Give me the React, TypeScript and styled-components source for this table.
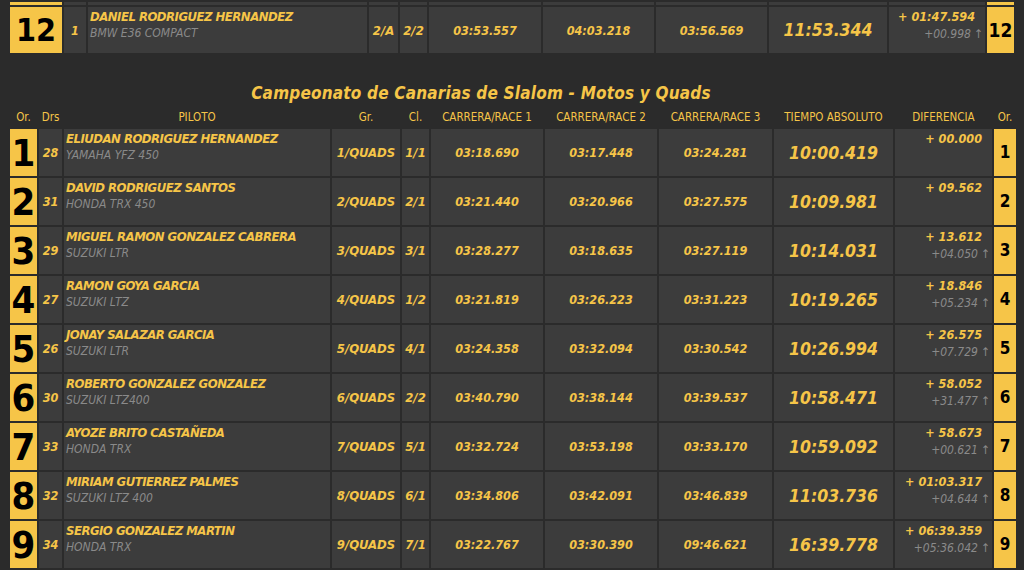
import styled, { createGlobalStyle } from 'styled-components'

const colors = {
  page: '#2b2b2b',
  cell: '#3c3c3c',
  yellow: '#f6c548',
  grey: '#8a8a8a',
}

const font = `'DejaVu Sans', 'Open Sans', sans-serif`

const GlobalStyle = createGlobalStyle`
  html, body {
    margin: 0;
    padding: 0;
    background: ${colors.page};
    overflow: hidden;
  }
  body {
    font-family: ${font};
    font-stretch: condensed;
  }
`

const Page = styled.div`
  width: 1024px;
  height: 570px;
  padding: 0 8px;
  box-sizing: border-box;
  overflow: hidden;
`

const Table = styled.table`
  width: 100%;
  table-layout: fixed;
  border-collapse: separate;
  border-spacing: 2px;
`

const Title = styled.h2`
  margin: 28px 0 1px 0;
  padding-right: 62px;
  height: 20px;
  line-height: 20px;
  text-align: center;
  color: ${colors.yellow};
  font-size: 17px;
  font-style: italic;
  font-weight: bold;
  letter-spacing: 0.2px;
`

const Head = styled.th`
  height: 21px;
  padding: 0;
  color: ${colors.yellow};
  font-size: 11.5px;
  font-weight: normal;
  text-align: center;
  white-space: nowrap;
`

const Stub = styled.td<{ gold?: boolean }>`
  height: 3px;
  padding: 0;
  background: ${(p) => (p.gold ? colors.yellow : colors.cell)};
`

const Cell = styled.td<{ big?: boolean }>`
  height: ${(p) => (p.big ? 46 : 47)}px;
  padding: 0;
  background: ${colors.cell};
  color: ${colors.yellow};
  font-style: italic;
  text-align: center;
  vertical-align: middle;
  white-space: nowrap;
  overflow: hidden;
`

const Pos = styled.td<{ size: number }>`
  padding: 0;
  background: ${colors.yellow};
  color: #000;
  font-size: ${(p) => p.size}px;
  font-weight: bold;
  line-height: 1;
  text-align: center;
  vertical-align: middle;
`

const Drs = styled(Cell)`
  font-size: 12.5px;
  font-weight: 600;
`

const Pilot = styled(Cell)`
  text-align: left;
  vertical-align: top;
`

const PilotInner = styled.div`
  padding: 2px 0 0 2px;
`

const Name = styled.div`
  font-size: 13px;
  font-weight: bold;
  line-height: 15px;
  letter-spacing: -0.5px;
`

const Car = styled.div`
  font-size: 12px;
  color: ${colors.grey};
  line-height: 18px;
`

const Small = styled(Cell)`
  font-size: 13px;
  font-weight: 600;
`

const Race = styled(Cell)`
  font-size: 12.5px;
  font-weight: 600;
`

const Total = styled(Cell)`
  font-size: 17.5px;
  font-weight: bold;
`

const Diff = styled(Cell)`
  text-align: right;
  vertical-align: top;
`

const DiffInner = styled.div`
  padding: 2px 10px 0 0;
`

const DiffMain = styled.div`
  font-size: 12.5px;
  font-weight: 600;
  line-height: 15px;
`

const DiffPrev = styled.div`
  font-size: 12px;
  color: ${colors.grey};
  line-height: 20px;
  margin-right: -8px;
`

const Arrow = styled.span`
  font-style: normal;
  margin-left: 3px;
`

type Row = {
  pos: number
  drs: number
  name: string
  car: string
  gr: string
  cl: string
  r1: string
  r2: string
  r3: string
  total: string
  diff: string
  prev: string
}

const topRow: Row = {
  pos: 12,
  drs: 1,
  name: 'DANIEL RODRIGUEZ HERNANDEZ',
  car: 'BMW E36 COMPACT',
  gr: '2/A',
  cl: '2/2',
  r1: '03:53.557',
  r2: '04:03.218',
  r3: '03:56.569',
  total: '11:53.344',
  diff: '+ 01:47.594',
  prev: '+00.998',
}

const rows: Row[] = [
  { pos: 1, drs: 28, name: 'ELIUDAN RODRIGUEZ HERNANDEZ', car: 'YAMAHA YFZ 450', gr: '1/QUADS', cl: '1/1', r1: '03:18.690', r2: '03:17.448', r3: '03:24.281', total: '10:00.419', diff: '+ 00.000', prev: '' },
  { pos: 2, drs: 31, name: 'DAVID RODRIGUEZ SANTOS', car: 'HONDA TRX 450', gr: '2/QUADS', cl: '2/1', r1: '03:21.440', r2: '03:20.966', r3: '03:27.575', total: '10:09.981', diff: '+ 09.562', prev: '' },
  { pos: 3, drs: 29, name: 'MIGUEL RAMON GONZALEZ CABRERA', car: 'SUZUKI LTR', gr: '3/QUADS', cl: '3/1', r1: '03:28.277', r2: '03:18.635', r3: '03:27.119', total: '10:14.031', diff: '+ 13.612', prev: '+04.050' },
  { pos: 4, drs: 27, name: 'RAMON GOYA GARCIA', car: 'SUZUKI LTZ', gr: '4/QUADS', cl: '1/2', r1: '03:21.819', r2: '03:26.223', r3: '03:31.223', total: '10:19.265', diff: '+ 18.846', prev: '+05.234' },
  { pos: 5, drs: 26, name: 'JONAY SALAZAR GARCIA', car: 'SUZUKI LTR', gr: '5/QUADS', cl: '4/1', r1: '03:24.358', r2: '03:32.094', r3: '03:30.542', total: '10:26.994', diff: '+ 26.575', prev: '+07.729' },
  { pos: 6, drs: 30, name: 'ROBERTO GONZALEZ GONZALEZ', car: 'SUZUKI LTZ400', gr: '6/QUADS', cl: '2/2', r1: '03:40.790', r2: '03:38.144', r3: '03:39.537', total: '10:58.471', diff: '+ 58.052', prev: '+31.477' },
  { pos: 7, drs: 33, name: 'AYOZE BRITO CASTAÑEDA', car: 'HONDA TRX', gr: '7/QUADS', cl: '5/1', r1: '03:32.724', r2: '03:53.198', r3: '03:33.170', total: '10:59.092', diff: '+ 58.673', prev: '+00.621' },
  { pos: 8, drs: 32, name: 'MIRIAM GUTIERREZ PALMES', car: 'SUZUKI LTZ 400', gr: '8/QUADS', cl: '6/1', r1: '03:34.806', r2: '03:42.091', r3: '03:46.839', total: '11:03.736', diff: '+ 01:03.317', prev: '+04.644' },
  { pos: 9, drs: 34, name: 'SERGIO GONZALEZ MARTIN', car: 'HONDA TRX', gr: '9/QUADS', cl: '7/1', r1: '03:22.767', r2: '03:30.390', r3: '09:46.621', total: '16:39.778', diff: '+ 06:39.359', prev: '+05:36.042' },
]

const topWidths = [52, 22, 279, 29, 27, 112, 111, 111, 118, 96, 27]
const mainWidths = [27, 23, 266, 68, 27, 112, 112, 113, 119, 97, 22]

const ResultRow = ({ row, big }: { row: Row; big?: boolean }) => (
  <tr>
    <Pos size={big ? 32 : 38}>{row.pos}</Pos>
    <Drs big={big}>{row.drs}</Drs>
    <Pilot big={big}>
      <PilotInner>
        <Name>{row.name}</Name>
        <Car>{row.car}</Car>
      </PilotInner>
    </Pilot>
    <Small big={big}>{row.gr}</Small>
    <Small big={big}>{row.cl}</Small>
    <Race big={big}>{row.r1}</Race>
    <Race big={big}>{row.r2}</Race>
    <Race big={big}>{row.r3}</Race>
    <Total big={big}>{row.total}</Total>
    <Diff big={big}>
      <DiffInner>
        <DiffMain>{row.diff}</DiffMain>
        {row.prev && (
          <DiffPrev>
            {row.prev}
            <Arrow>↑</Arrow>
          </DiffPrev>
        )}
      </DiffInner>
    </Diff>
    <Pos size={big ? 19 : 17}>{row.pos}</Pos>
  </tr>
)

const headers = ['Or.', 'Drs', 'PILOTO', 'Gr.', 'Cl.', 'CARRERA/RACE 1', 'CARRERA/RACE 2', 'CARRERA/RACE 3', 'TIEMPO ABSOLUTO', 'DIFERENCIA', 'Or.']

export default function App() {
  return (
    <Page>
      <GlobalStyle />
      <Table>
        <colgroup>
          {topWidths.map((w, i) => (
            <col key={i} style={{ width: w }} />
          ))}
        </colgroup>
        <tbody>
          <tr>
            {topWidths.map((_, i) => (
              <Stub key={i} gold={i === 0 || i === topWidths.length - 1} />
            ))}
          </tr>
          <ResultRow row={topRow} big />
        </tbody>
      </Table>
      <Title>Campeonato de Canarias de Slalom - Motos y Quads</Title>
      <Table>
        <colgroup>
          {mainWidths.map((w, i) => (
            <col key={i} style={{ width: w }} />
          ))}
        </colgroup>
        <thead>
          <tr>
            {headers.map((h, i) => (
              <Head key={i}>{h}</Head>
            ))}
          </tr>
        </thead>
        <tbody>
          {rows.map((r) => (
            <ResultRow key={r.pos} row={r} />
          ))}
        </tbody>
      </Table>
    </Page>
  )
}
